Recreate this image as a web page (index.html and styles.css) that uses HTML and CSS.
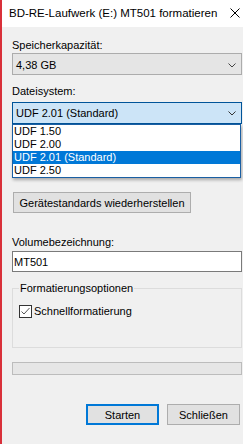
FILE: index.html
```html
<!DOCTYPE html>
<html lang="de">
<head>
  <meta charset="UTF-8">
  <meta name="viewport" content="width=device-width, initial-scale=1.0">
  <title>BD-RE-Laufwerk (E:) MT501 formatieren</title>
  <link rel="stylesheet" href="styles.css">
</head>
<body>
  <div class="window">
    <div class="titlebar">
      <span class="title">BD-RE-Laufwerk (E:) MT501 formatieren</span>
      <svg class="close" width="10" height="10" viewBox="0 0 10 10">
        <path d="M0.5 0.5 L9.5 9.5 M9.5 0.5 L0.5 9.5" stroke="#000" stroke-width="1" fill="none"/>
      </svg>
    </div>
    <div class="content">
      <div class="label">Speicherkapazität:</div>
      <div class="combo combo-capacity">
        <span>4,38 GB</span>
        <svg class="chevron" width="8" height="5" viewBox="0 0 8 5">
          <path d="M0.5 0.5 L4 4 L7.5 0.5" stroke="#444" stroke-width="1" fill="none"/>
        </svg>
      </div>

      <div class="label label-fs">Dateisystem:</div>
      <div class="combo-wrap">
        <div class="combo combo-open">
          <span>UDF 2.01 (Standard)</span>
          <svg class="chevron" width="8" height="5" viewBox="0 0 8 5">
            <path d="M0.5 0.5 L4 4 L7.5 0.5" stroke="#333" stroke-width="1" fill="none"/>
          </svg>
        </div>
        <ul class="dropdown">
          <li>UDF 1.50</li>
          <li>UDF 2.00</li>
          <li class="selected">UDF 2.01 (Standard)</li>
          <li>UDF 2.50</li>
        </ul>
      </div>

      <button class="btn btn-reset">Gerätestandards wiederherstellen</button>

      <div class="label label-vol">Volumebezeichnung:</div>
      <input class="textbox" type="text" value="MT501">

      <fieldset class="group">
        <legend>Formatierungsoptionen</legend>
        <label class="check">
          <span class="checkbox">
            <svg width="11" height="11" viewBox="0 0 11 11">
              <path d="M1.5 5.5 L4 8 L9.5 2" stroke="#555" stroke-width="1" fill="none"/>
            </svg>
          </span>
          Schnellformatierung
        </label>
      </fieldset>

      <div class="progress"></div>

      <div class="actions">
        <button class="btn btn-default">Starten</button>
        <button class="btn">Schließen</button>
      </div>
    </div>
  </div>
</body>
</html>
```

FILE: styles.css
```css
body {
  margin: 0;
  background-color: #f0f0f0;
  font-family: 'Liberation Sans', Arial, sans-serif;
  font-size: 11px;
  color: #000;
}

.window {
  height: 444px;
  border-left: 2px solid #d9303a;
  overflow: hidden;
}

.titlebar {
  height: 27px;
  display: flex;
  align-items: center;
  justify-content: space-between;
  padding: 0 3px 0 7px;
  background-color: #fff;
}

.title {
  font-size: 11.5px;
  line-height: 15px;
}

.close {
  margin-top: -1px;
}

.content {
  padding: 11px 1px 0 10px;
}

.label {
  line-height: 15px;
}

.label-fs {
  margin-top: 9px;
}

.label-vol {
  margin-top: 22px;
}

.combo {
  box-sizing: border-box;
  height: 22px;
  display: flex;
  align-items: center;
  justify-content: space-between;
  padding: 0 5px 0 3px;
  background-color: #e5e5e5;
  border: 1px solid #acacac;
  line-height: 15px;
}

.combo-capacity {
  padding-top: 2px;
}

.combo-wrap {
  position: relative;
  margin-top: 3px;
}

.combo-open {
  background-color: #cce4f7;
  border-color: #005499;
}

.dropdown {
  position: absolute;
  top: 100%;
  left: 0;
  right: 1px;
  margin: 0;
  padding: 0;
  list-style: none;
  background-color: #fff;
  border: 1px solid #1a5fa3;
  box-shadow: 1px 2px 3px rgba(0, 0, 0, 0.3);
  z-index: 2;
}

.dropdown li {
  height: 13px;
  line-height: 13px;
  padding-left: 1px;
}

.dropdown li.selected {
  background-color: #0078d7;
  color: #fff;
}

.btn {
  box-sizing: border-box;
  height: 21px;
  padding: 0;
  font-family: inherit;
  font-size: 11px;
  color: #000;
  background-color: #e1e1e1;
  border: 1px solid #adadad;
  border-radius: 0;
}

.btn-reset {
  display: block;
  width: 178px;
  margin: 68px 0 0 1px;
}

.textbox {
  display: block;
  box-sizing: border-box;
  width: 100%;
  height: 21px;
  margin: 1px 0 0 0;
  padding: 0 0 0 1px;
  font-family: inherit;
  font-size: 11px;
  color: #000;
  background-color: #fff;
  border: 1px solid #7a7a7a;
  outline: none;
}

.group {
  margin: 9px 0 0 0;
  padding: 0 0 28px 6px;
  border: 1px solid #dcdcdc;
  min-inline-size: 0;
}

.group legend {
  padding: 0 1px;
  line-height: 15px;
}

.check {
  display: flex;
  align-items: center;
  gap: 2px;
  margin-top: 8px;
  line-height: 15px;
}

.checkbox {
  box-sizing: border-box;
  width: 13px;
  height: 13px;
  display: flex;
  align-items: center;
  justify-content: center;
  background-color: #fff;
  border: 1px solid #333;
}

.progress {
  box-sizing: border-box;
  height: 13px;
  margin-top: 14px;
  background-color: #e6e6e6;
  border: 1px solid #bcbcbc;
}

.actions {
  display: flex;
  justify-content: flex-end;
  gap: 8px;
  margin-top: 29px;
  padding-right: 2px;
}

.actions .btn {
  width: 73px;
}

.btn-default {
  border: 2px solid #0078d7;
}
```
